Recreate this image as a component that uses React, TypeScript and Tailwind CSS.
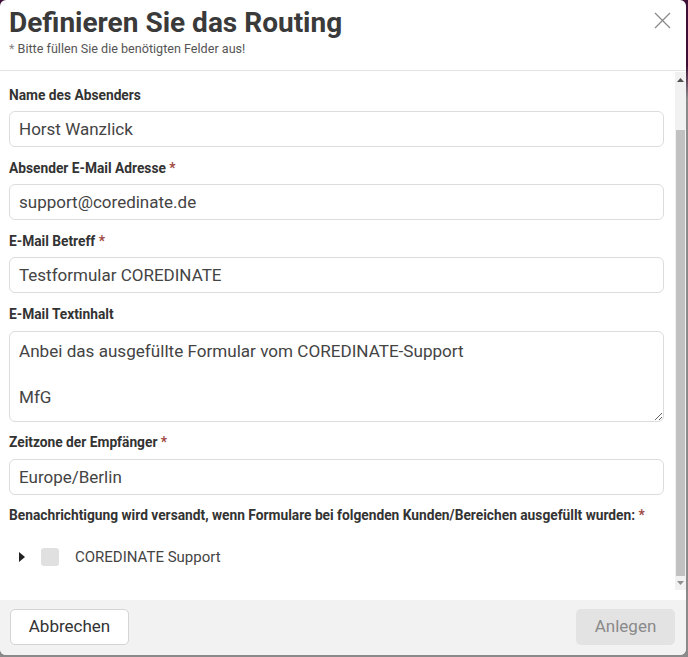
import React from 'react';

type FieldProps = {
  label: string;
  required?: boolean;
  children: React.ReactNode;
};

const Field: React.FC<FieldProps> = ({ label, required, children }) => (
  <div className="mb-[12px]">
    <div className="text-[13.75px] leading-[18px] font-bold text-[#333] mb-[7px]">
      {label}
      {required && <span className="text-[#a0463f]"> *</span>}
    </div>
    {children}
  </div>
);

const inputCls =
  'block w-full h-[36px] rounded-[6px] border border-[#dcdcdc] bg-white pl-[9px] pr-2 text-[17px] text-[#444] outline-none';

const Scrollbar = () => (
  <div className="w-[11px] shrink-0 flex flex-col bg-[#f1f1f1] mt-[1px] mb-[10px]">
    <div className="h-[16px] flex items-center justify-center">
      <svg width="7" height="4" viewBox="0 0 7 4">
        <path d="M3.5 0 L7 4 L0 4 Z" fill="#505050" />
      </svg>
    </div>
    <div className="h-[42px]" />
    <div className="flex-1 bg-[#c1c1c1] mx-[1px]" />
    <div className="h-[14px] flex items-center justify-center">
      <svg width="7" height="4" viewBox="0 0 7 4">
        <path d="M0 0 L7 0 L3.5 4 Z" fill="#909090" />
      </svg>
    </div>
  </div>
);

export default function App() {
  return (
    <div
      className="w-[688px] h-[657px] bg-gradient-to-b from-[#3d0f37] from-10% to-[#8a8a8a] to-15%"
      style={{ fontFamily: 'Roboto, "Liberation Sans", Arial, sans-serif' }}
    >
      <div className="w-[686px] h-[655px] bg-white rounded-[6px] flex flex-col overflow-hidden">
        {/* Header */}
        <div className="relative shrink-0 h-[71px] border-b border-[#e4e4e4] pl-[9px] pt-[6px]">
          <h1 className="text-[28px] leading-[34px] font-bold text-[#3a3a3a]">Definieren Sie das Routing</h1>
          <p className="text-[12.6px] leading-[16px] text-[#555] mt-[1px]">
            <span className="text-[#888]">*</span> Bitte füllen Sie die benötigten Felder aus!
          </p>
          <button className="absolute right-[15px] top-[12px] text-[#8a8a8a]" aria-label="Schließen">
            <svg width="17" height="17" viewBox="0 0 17 17" fill="none" stroke="currentColor" strokeWidth="1.3">
              <path d="M1 1 L16 16 M16 1 L1 16" />
            </svg>
          </button>
        </div>

        {/* Body */}
        <div className="flex-1 flex min-h-0">
          <div className="flex-1 pl-[9px] pr-[11px] pt-[15px]">
            <Field label="Name des Absenders">
              <input className={inputCls} defaultValue="Horst Wanzlick" readOnly />
            </Field>
            <Field label="Absender E-Mail Adresse" required>
              <input className={inputCls} defaultValue="support@coredinate.de" readOnly />
            </Field>
            <Field label="E-Mail Betreff" required>
              <input className={inputCls} defaultValue="Testformular COREDINATE" readOnly />
            </Field>
            <div className="mb-[11px]">
              <div className="text-[13.75px] leading-[18px] font-bold text-[#333] mb-[8px]">E-Mail Textinhalt</div>
              <textarea
                className="block w-full h-[91px] rounded-[6px] border border-[#dcdcdc] bg-white pl-[9px] pr-2 pt-[8px] text-[17.1px] leading-[23px] text-[#444] outline-none"
                defaultValue={'Anbei das ausgefüllte Formular vom COREDINATE-Support\n\nMfG'}
                readOnly
              />
            </div>
            <div className="mb-[11px]">
              <div className="text-[13.75px] leading-[18px] font-bold text-[#333] mb-[8px]">
                Zeitzone der Empfänger<span className="text-[#a0463f]"> *</span>
              </div>
              <input className={inputCls} defaultValue="Europe/Berlin" readOnly />
            </div>
            <div className="text-[13.75px] leading-[18px] font-bold text-[#333]">
              Benachrichtigung wird versandt, wenn Formulare bei folgenden Kunden/Bereichen ausgefüllt wurden:
              <span className="text-[#a0463f]"> *</span>
            </div>
            <div className="flex items-center h-[20px] mt-[23px]">
              <svg width="6" height="10" viewBox="0 0 6 10" className="ml-[10px]">
                <path d="M0 0 L6 5 L0 10 Z" fill="#222" />
              </svg>
              <div className="ml-[16px] w-[18px] h-[18px] rounded-[3px] bg-[#e0e0e0]" />
              <span className="ml-[16px] text-[15px] text-[#444]">COREDINATE Support</span>
            </div>
          </div>
          <Scrollbar />
        </div>

        {/* Footer */}
        <div className="shrink-0 h-[55px] bg-[#f2f2f2] flex items-center justify-between pl-[10px] pr-[11px] pb-[1px]">
          <button className="h-[36px] w-[119px] rounded-[5px] border border-[#d4d4d4] bg-white text-[17px] text-[#333]">
            Abbrechen
          </button>
          <button className="h-[36px] w-[99px] rounded-[5px] bg-[#e3e3e3] text-[17px] text-[#8a8a8a]">
            Anlegen
          </button>
        </div>
      </div>
    </div>
  );
}
